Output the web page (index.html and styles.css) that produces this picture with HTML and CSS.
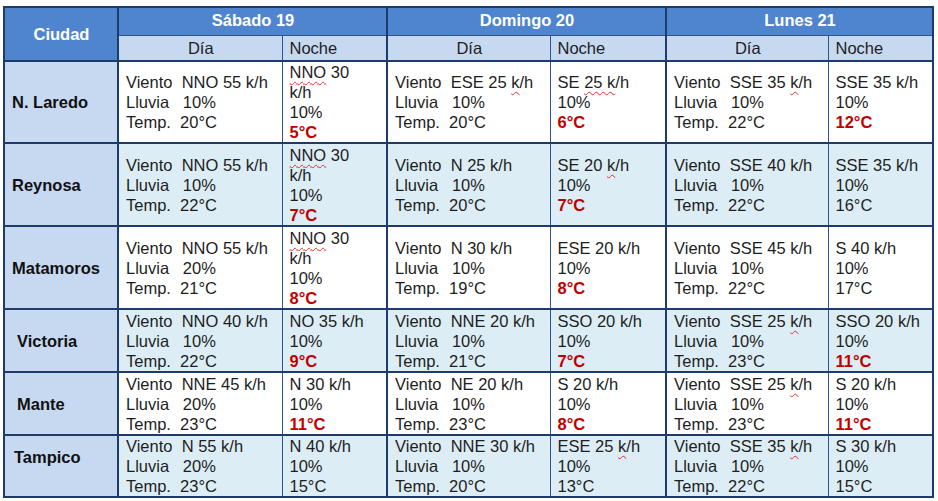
FILE: index.html
```html
<!DOCTYPE html>
<html lang="es">
<head>
<meta charset="utf-8">
<title>Pronóstico</title>
<link rel="stylesheet" href="styles.css">
</head>
<body>
<table class="wx">
  <colgroup>
    <col class="c-city"><col class="c-dia1"><col class="c-noc1"><col class="c-dia2"><col class="c-noc2"><col class="c-dia3"><col class="c-noc3">
  </colgroup>
  <thead>
    <tr class="h1">
      <th rowspan="2" class="city-h">Ciudad</th>
      <th colspan="2" class="day">Sábado 19</th>
      <th colspan="2" class="day">Domingo 20</th>
      <th colspan="2" class="day">Lunes 21</th>
    </tr>
    <tr class="h2">
      <th class="sub dia">Día</th><th class="sub noc">Noche</th>
      <th class="sub dia">Día</th><th class="sub noc">Noche</th>
      <th class="sub dia">Día</th><th class="sub noc">Noche</th>
    </tr>
  </thead>
  <tbody>
    <tr class="tall first">
      <th class="city">N. Laredo</th>
      <td class="d">Viento  NNO 55 k/h<br>Lluvia   10%<br>Temp.  20°C</td>
      <td class="n"><span class="sp">NNO</span> 30<br>k/h<br>10%<br><b>5°C</b></td>
      <td class="d">Viento  ESE 25 <span class="sp">k</span>/h<br>Lluvia   10%<br>Temp.  20°C</td>
      <td class="n">SE <span class="sp">25 k</span>/h<br>10%<br><b>6°C</b></td>
      <td class="d">Viento  SSE 35 <span class="sp">k</span>/h<br>Lluvia   10%<br>Temp.  22°C</td>
      <td class="n">SSE 35 k/h<br>10%<br><b>12°C</b></td>
    </tr>
    <tr class="tall alt">
      <th class="city">Reynosa</th>
      <td class="d">Viento  NNO 55 k/h<br>Lluvia   10%<br>Temp.  22°C</td>
      <td class="n"><span class="sp">NNO</span> 30<br>k/h<br>10%<br><b>7°C</b></td>
      <td class="d">Viento  N 25 k/h<br>Lluvia   10%<br>Temp.  20°C</td>
      <td class="n">SE 20 <span class="sp">k</span>/h<br>10%<br><b>7°C</b></td>
      <td class="d">Viento  SSE 40 k/h<br>Lluvia   10%<br>Temp.  22°C</td>
      <td class="n">SSE 35 k/h<br>10%<br>16°C</td>
    </tr>
    <tr class="tall">
      <th class="city">Matamoros</th>
      <td class="d">Viento  NNO 55 k/h<br>Lluvia   20%<br>Temp.  21°C</td>
      <td class="n"><span class="sp">NNO</span> 30<br>k/h<br>10%<br><b>8°C</b></td>
      <td class="d">Viento  N 30 k/h<br>Lluvia   10%<br>Temp.  19°C</td>
      <td class="n">ESE 20 k/h<br>10%<br><b>8°C</b></td>
      <td class="d">Viento  SSE 45 k/h<br>Lluvia   10%<br>Temp.  22°C</td>
      <td class="n">S 40 k/h<br>10%<br>17°C</td>
    </tr>
    <tr class="short alt">
      <th class="city ind">Victoria</th>
      <td class="d">Viento  NNO 40 k/h<br>Lluvia   10%<br>Temp.  22°C</td>
      <td class="n">NO 35 k/h<br>10%<br><b>9°C</b></td>
      <td class="d">Viento  NNE 20 k/h<br>Lluvia   10%<br>Temp.  21°C</td>
      <td class="n">SSO 20 k/h<br>10%<br><b>7°C</b></td>
      <td class="d">Viento  SSE 25 <span class="sp">k</span>/h<br>Lluvia   10%<br>Temp.  23°C</td>
      <td class="n">SSO 20 k/h<br>10%<br><b>11°C</b></td>
    </tr>
    <tr class="short">
      <th class="city ind">Mante</th>
      <td class="d">Viento  NNE 45 k/h<br>Lluvia   20%<br>Temp.  23°C</td>
      <td class="n">N 30 k/h<br>10%<br><b>11°C</b></td>
      <td class="d">Viento  NE 20 k/h<br>Lluvia   10%<br>Temp.  23°C</td>
      <td class="n">S 20 k/h<br>10%<br><b>8°C</b></td>
      <td class="d">Viento  SSE 25 <span class="sp">k</span>/h<br>Lluvia   10%<br>Temp.  23°C</td>
      <td class="n">S 20 k/h<br>10%<br><b>11°C</b></td>
    </tr>
    <tr class="last alt">
      <th class="city up">Tampico</th>
      <td class="d">Viento  N 55 k/h<br>Lluvia   20%<br>Temp.  23°C</td>
      <td class="n">N 40 k/h<br>10%<br>15°C</td>
      <td class="d">Viento  NNE 30 k/h<br>Lluvia   10%<br>Temp.  20°C</td>
      <td class="n">ESE 25 <span class="sp">k</span>/h<br>10%<br>13°C</td>
      <td class="d">Viento  SSE 35 <span class="sp">k</span>/h<br>Lluvia   10%<br>Temp.  22°C</td>
      <td class="n">S 30 k/h<br>10%<br>15°C</td>
    </tr>
  </tbody>
</table>
</body>
</html>
```

FILE: styles.css
```css
html, body {
  margin: 0;
  background: #ffffff;
}
body {
  padding: 6px 0 0 3px;
  font-family: "Liberation Sans", Arial, sans-serif;
  font-size: 16.5px;
  color: #1e1e1e;
}
.wx {
  border-collapse: collapse;
  table-layout: fixed;
  width: 929px;
  border: 2px solid #1f3b6a;
}
.c-city { width: 114px; }
.c-dia1 { width: 164px; }
.c-noc1 { width: 105px; }
.c-dia2 { width: 163px; }
.c-noc2 { width: 116px; }
.c-dia3 { width: 162px; }
.c-noc3 { width: 105px; }

.wx th, .wx td {
  padding: 0 6px 0 7px;
  line-height: 20px;
  white-space: pre;
  overflow: visible;
}

/* header */
.h1 th {
  height: 24px;
  background: #4f85ce;
  color: #ffffff;
  font-weight: bold;
  text-align: center;
  vertical-align: middle;
  padding-bottom: 3px;
  border-left: 2px solid #1f3b6a;
  border-right: 2px solid #1f3b6a;
  border-bottom: 1px solid #2d5590;
}
.h1 .city-h {
  padding-bottom: 0;
  border-bottom: 2px solid #1f3b6a;
}
.h2 th {
  height: 24px;
  background: #c6d9f1;
  font-weight: normal;
  color: #1e1e1e;
  vertical-align: middle;
  border-bottom: 2px solid #1f3b6a;
}
.sub.dia {
  text-align: center;
  border-right: 1px solid #2d5590;
}
.sub.noc {
  text-align: left;
  border-right: 2px solid #1f3b6a;
}

/* body */
tbody tr { background: #ffffff; }
tbody tr.alt { background: #dcedf5; }
tbody tr { border-bottom: 2px solid #1f3b6a; }
tr.tall td, tr.tall th { height: 81px; }
tr.tall.first td, tr.tall.first th { height: 80px; }
tr.short td, tr.short th { height: 61px; }
tr.last td, tr.last th { height: 57px; vertical-align: top; }

.city {
  background: #c6d9f1;
  font-weight: bold;
  text-align: left;
  vertical-align: middle;
  padding-left: 8px;
  border-right: 2px solid #1f3b6a;
  color: #111;
}
.city.ind { padding-left: 12px; }
tr.last th.city.up {
  padding-left: 9px;
  padding-top: 11px;
  height: 46px;
}

.d {
  vertical-align: middle;
  border-right: 1px solid #2d5590;
}
.n {
  vertical-align: middle;
  border-right: 2px solid #1f3b6a;
}
.n b {
  color: #c00000;
  font-weight: bold;
}
.sp {
  text-decoration: underline wavy #e0302a;
  text-decoration-thickness: 1px;
  text-underline-offset: 3px;
  text-decoration-skip-ink: none;
}
```
